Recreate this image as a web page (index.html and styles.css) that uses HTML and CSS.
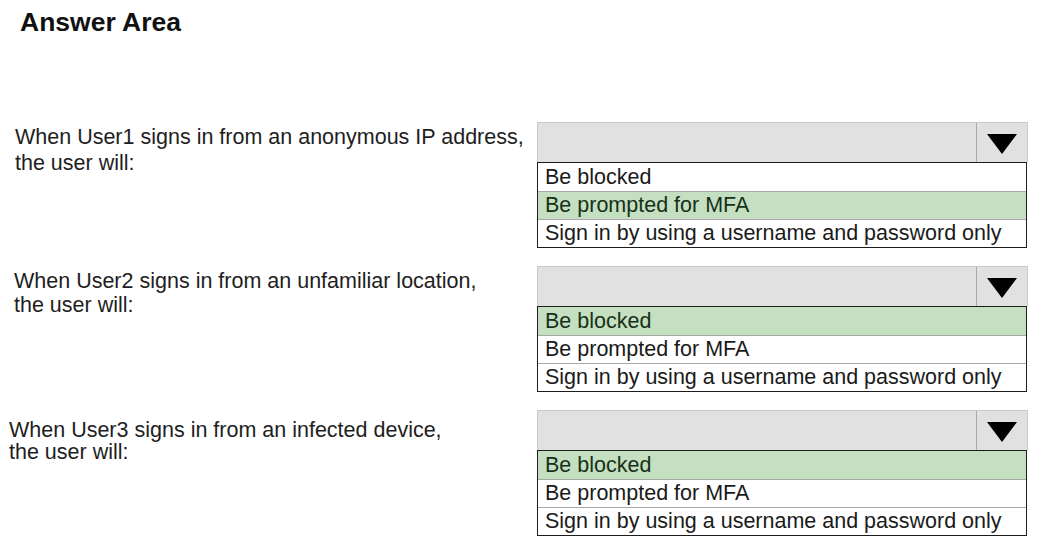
FILE: index.html
```html
<!DOCTYPE html>
<html>

<head>
    <link rel="stylesheet" href="styles.css">
</head>

<body>
    <h1 class="title">Answer Area</h1>

    <div class="answers">
        <div class="question q1">When User1 signs in from an anonymous IP address,<br>the user will:</div>
        <div class="dropdown">
            <div class="dropdown-head">
                <span class="dropdown-arrow"></span>
            </div>
            <ul class="dropdown-list">
                <li>Be blocked</li>
                <li class="selected">Be prompted for MFA</li>
                <li>Sign in by using a username and password only</li>
            </ul>
        </div>

        <div class="question q2">When User2 signs in from an unfamiliar location,<br>the user will:</div>
        <div class="dropdown">
            <div class="dropdown-head">
                <span class="dropdown-arrow"></span>
            </div>
            <ul class="dropdown-list">
                <li class="selected">Be blocked</li>
                <li>Be prompted for MFA</li>
                <li>Sign in by using a username and password only</li>
            </ul>
        </div>

        <div class="question q3">When User3 signs in from an infected device,<br>the user will:</div>
        <div class="dropdown">
            <div class="dropdown-head">
                <span class="dropdown-arrow"></span>
            </div>
            <ul class="dropdown-list">
                <li class="selected">Be blocked</li>
                <li>Be prompted for MFA</li>
                <li>Sign in by using a username and password only</li>
            </ul>
        </div>
    </div>
</body>

</html>
```

FILE: styles.css
```css
body {
    margin: 0;
    background-color: #ffffff;
    color: #1a1a1a;
    font-family: "Liberation Sans", Arial, sans-serif;
}

.title {
    margin: 0;
    padding: 6px 0 0 20px;
    font-size: 26.5px;
    line-height: 32px;
    font-weight: bold;
    color: #111111;
}

.answers {
    display: grid;
    grid-template-columns: 537px 491px;
    row-gap: 18px;
    margin-top: 84px;
}

.question {
    font-size: 21.5px;
    color: #1e1e1e;
}

.q1 {
    padding: 2px 0 0 15px;
    line-height: 26px;
}

.q2 {
    padding: 3px 0 0 14px;
    line-height: 24px;
}

.q3 {
    padding: 9px 0 0 9px;
    line-height: 22px;
}

.dropdown {
    display: flex;
    flex-direction: column;
}

.dropdown-head {
    display: flex;
    justify-content: flex-end;
    height: 40px;
    box-sizing: border-box;
    background-color: #e1e1e1;
    border: 1px solid #c9c9c9;
    border-bottom: none;
}

.dropdown-arrow {
    display: flex;
    align-items: center;
    justify-content: center;
    width: 50px;
    border-left: 1px solid #a9a9a9;
}

.dropdown-arrow::before {
    content: "";
    width: 0;
    height: 0;
    margin-top: 2px;
    border-left: 15px solid transparent;
    border-right: 15px solid transparent;
    border-top: 20px solid #000000;
}

.dropdown-list {
    list-style: none;
    margin: 0 1px 0 0;
    padding: 0;
    border: 1px solid #1c1c1c;
    background-color: #ffffff;
}

.dropdown-list li {
    height: 28px;
    box-sizing: border-box;
    padding-left: 7px;
    font-size: 21.5px;
    line-height: 28px;
    color: #1a1a1a;
}

.dropdown-list li + li {
    border-top: 1px solid #a8a8a8;
    line-height: 27px;
}

.dropdown-list li.selected {
    background-color: #c5e0c1;
    color: #173019;
}
```
